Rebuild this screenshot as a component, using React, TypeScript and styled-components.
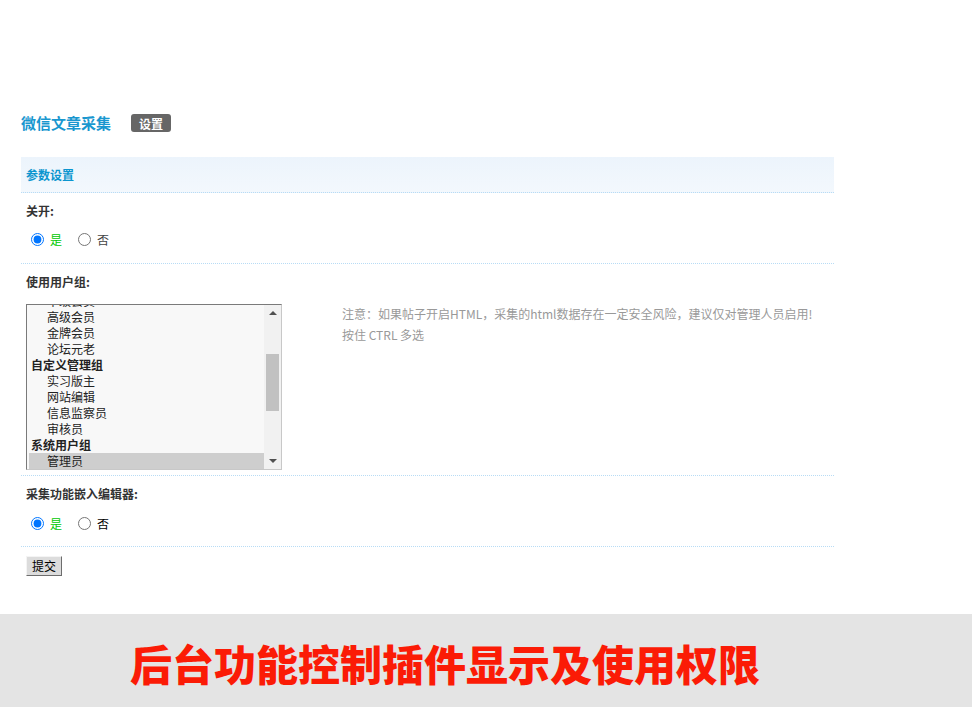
import React, { useLayoutEffect, useRef } from "react";
import styled, { createGlobalStyle } from "styled-components";

const GlobalStyle = createGlobalStyle`
  html, body { margin: 0; padding: 0; background: #fff; }
  body {
    font-family: "Noto Sans CJK SC", "Noto Sans", sans-serif;
    font-size: 12px;
    color: #333;
  }
  * { box-sizing: border-box; }
`;

const Page = styled.div`
  width: 972px;
  min-height: 707px;
  display: flex;
  flex-direction: column;
`;

const Main = styled.div`
  padding: 110px 0 0 21px;
  width: 834px;
`;

const TitleBar = styled.div`
  display: flex;
  align-items: center;
  gap: 20px;
  height: 26px;
`;

const Title = styled.h3`
  margin: 0;
  font-size: 15px;
  font-weight: bold;
  color: #1997cf;
  line-height: 26px;
`;

const Badge = styled.span`
  display: inline-flex;
  align-items: center;
  justify-content: center;
  width: 40px;
  height: 18px;
  border-radius: 3px;
  background: #666;
  color: #fff;
  font-weight: bold;
  font-size: 12px;
`;

const Table = styled.div`
  margin-top: 21px;
  width: 813px;
`;

const HeaderRow = styled.div`
  height: 36px;
  padding: 0 5px;
  display: flex;
  align-items: center;
  background: linear-gradient(#ecf4fc, #f3f8fd);
  border-bottom: 1px dotted #b8dcf5;
  color: #0c95cf;
  font-weight: bold;
  font-size: 12px;
`;

const LabelRow = styled.div`
  padding: 9px 5px 0;
  height: 28px;
  line-height: 18px;
  font-weight: bold;
  color: #333;
`;

const Row = styled.div`
  display: grid;
  grid-template-columns: 320px 1fr;
  border-bottom: 1px dotted #b8dcf5;
`;

const Cell = styled.div<{ $pad: string }>`
  padding: ${(p) => p.$pad};
`;

const RadioList = styled.div`
  display: flex;
  align-items: center;
  gap: 11px;
  height: 22px;
`;

const RadioItem = styled.label<{ $color: string }>`
  display: flex;
  align-items: center;
  color: ${(p) => p.$color};
  font-size: 12px;
  input {
    margin: 0 6px 0 5px;
    width: 13px;
    height: 13px;
  }
`;

const ListBox = styled.div`
  width: 256px;
  height: 166px;
  border: 1px solid;
  border-color: #7a7a7a #c8c8c8 #c8c8c8 #7a7a7a;
  background: #f8f8f8;
  display: flex;
`;

const ListViewport = styled.div`
  flex: 1;
  overflow: hidden;
  padding-left: 2px;
`;

const Group = styled.div`
  height: 16px;
  line-height: 16px;
  padding-left: 2px;
  font-weight: bold;
  color: #222;
  white-space: nowrap;
`;

const Option = styled.div<{ $selected?: boolean }>`
  height: 16px;
  line-height: 16px;
  padding-left: 18px;
  color: #222;
  white-space: nowrap;
  background: ${(p) => (p.$selected ? "#cecece" : "transparent")};
`;

const Scrollbar = styled.div`
  width: 17px;
  background: #f1f1f1;
  display: flex;
  flex-direction: column;
  align-items: center;
  padding: 0 1px;
`;

const Arrow = styled.div<{ $down?: boolean }>`
  height: 16px;
  width: 100%;
  display: flex;
  align-items: center;
  justify-content: center;
  &::before {
    content: "";
    width: 0;
    height: 0;
    border-left: 4px solid transparent;
    border-right: 4px solid transparent;
    ${(p) =>
      p.$down
        ? "border-top: 4px solid #505050;"
        : "border-bottom: 4px solid #505050;"}
  }
`;

const Track = styled.div`
  flex: 1;
  width: 100%;
  padding-top: 33px;
`;

const Thumb = styled.div`
  width: 13px;
  margin: 0 auto;
  height: 57px;
  background: #c1c1c1;
`;

const Tips = styled.div`
  color: #999;
  font-size: 12px;
  line-height: 21px;
  margin-top: -1px;
`;

const SubmitBar = styled.div`
  padding: 9px 5px 0;
`;

const SubmitButton = styled.button`
  font-family: "Noto Sans CJK SC", sans-serif;
  font-size: 12px;
  color: #000;
  width: 36px;
  height: 20px;
  padding: 0;
  background: #dcdcdc;
  border: 1px solid;
  border-color: #f4f4f4 #6d6d6d #6d6d6d #f4f4f4;
  line-height: 16px;
`;

const Banner = styled.div`
  margin-top: 38px;
  height: 93px;
  background: #e4e4e4;
  display: flex;
  align-items: center;
  padding: 4px 0 0 130px;
`;

const BannerText = styled.div`
  font-size: 42px;
  font-weight: 900;
  color: #fb1b06;
  line-height: 1;
  white-space: nowrap;
`;

type Entry = { label: string; group?: boolean; selected?: boolean };

const entries: Entry[] = [
  { label: "会员用户组", group: true },
  { label: "限制会员" },
  { label: "新手上路" },
  { label: "注册会员" },
  { label: "中级会员" },
  { label: "高级会员" },
  { label: "金牌会员" },
  { label: "论坛元老" },
  { label: "自定义管理组", group: true },
  { label: "实习版主" },
  { label: "网站编辑" },
  { label: "信息监察员" },
  { label: "审核员" },
  { label: "系统用户组", group: true },
  { label: "管理员", selected: true },
  { label: "超级版主" },
  { label: "版主" },
  { label: "禁止发言" },
  { label: "禁止访问" },
  { label: "禁止 IP" },
  { label: "游客" },
  { label: "等待验证会员" },
];

function GroupSelect() {
  const ref = useRef<HTMLDivElement>(null);
  useLayoutEffect(() => {
    if (ref.current) ref.current.scrollTop = 76;
  }, []);
  return (
    <ListBox>
      <ListViewport ref={ref}>
        {entries.map((e, i) =>
          e.group ? (
            <Group key={i}>{e.label}</Group>
          ) : (
            <Option key={i} $selected={e.selected}>
              {e.label}
            </Option>
          )
        )}
      </ListViewport>
      <Scrollbar>
        <Arrow />
        <Track>
          <Thumb />
        </Track>
        <Arrow $down />
      </Scrollbar>
    </ListBox>
  );
}

function YesNo({ name, noColor }: { name: string; noColor: string }) {
  return (
    <RadioList>
      <RadioItem $color="#00c800">
        <input type="radio" name={name} defaultChecked />是
      </RadioItem>
      <RadioItem $color={noColor}>
        <input type="radio" name={name} />否
      </RadioItem>
    </RadioList>
  );
}

export default function App() {
  return (
    <Page>
      <GlobalStyle />
      <Main>
        <TitleBar>
          <Title>微信文章采集</Title>
          <Badge>设置</Badge>
        </TitleBar>
        <Table>
          <HeaderRow>参数设置</HeaderRow>
          <LabelRow>关开:</LabelRow>
          <Row>
            <Cell $pad="7px 5px 13px 5px">
              <YesNo name="open" noColor="#444" />
            </Cell>
            <Cell $pad="0" />
          </Row>
          <LabelRow>使用用户组:</LabelRow>
          <Row>
            <Cell $pad="12px 5px 5px 5px">
              <GroupSelect />
            </Cell>
            <Cell $pad="12px 0 5px 1px">
              <Tips>
                注意：如果帖子开启HTML，采集的html数据存在一定安全风险，建议仅对管理人员启用!
                <br />
                按住 CTRL 多选
              </Tips>
            </Cell>
          </Row>
          <LabelRow>采集功能嵌入编辑器:</LabelRow>
          <Row>
            <Cell $pad="8px 5px 12px 5px">
              <YesNo name="editor" noColor="#000" />
            </Cell>
            <Cell $pad="0" />
          </Row>
          <SubmitBar>
            <SubmitButton type="button">提交</SubmitButton>
          </SubmitBar>
        </Table>
      </Main>
      <Banner>
        <BannerText>后台功能控制插件显示及使用权限</BannerText>
      </Banner>
    </Page>
  );
}
